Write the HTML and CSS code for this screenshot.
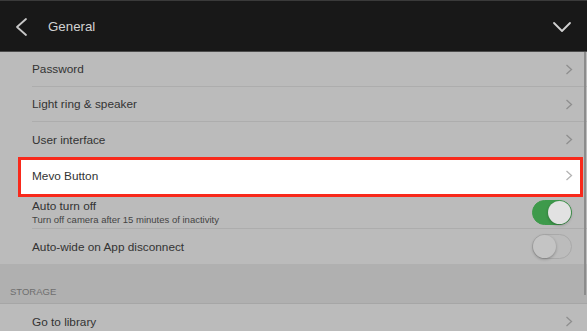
FILE: index.html
```html
<!DOCTYPE html>
<html lang="en">
<head>
    <meta charset="UTF-8">
    <meta name="viewport" content="width=device-width, initial-scale=1.0">
    <title>General</title>
    <link rel="stylesheet" href="styles.css">
</head>
<body>
    <header>
        <svg class="back" width="14" height="20" viewBox="0 0 14 20">
            <path d="M11 2 L2 10 L11 18" fill="none" stroke="#c8c8c8" stroke-width="1.8" stroke-linecap="round" stroke-linejoin="round"/>
        </svg>
        <h1>General</h1>
        <svg class="down" width="20" height="14" viewBox="0 0 20 14">
            <path d="M2 3 L10 11 L18 3" fill="none" stroke="#d0d0d0" stroke-width="1.8" stroke-linecap="round" stroke-linejoin="round"/>
        </svg>
    </header>

    <main class="settings">
        <div class="scrollbar"></div>

        <section class="group">
            <div class="row">
                <span>Password</span>
                <svg class="chev" width="8" height="11" viewBox="0 0 8 11"><path d="M1.5 1 L6.5 5.5 L1.5 10" fill="none" stroke="#8e8e8e" stroke-width="1.3"/></svg>
            </div>
            <div class="row">
                <span>Light ring &amp; speaker</span>
                <svg class="chev" width="8" height="11" viewBox="0 0 8 11"><path d="M1.5 1 L6.5 5.5 L1.5 10" fill="none" stroke="#8e8e8e" stroke-width="1.3"/></svg>
            </div>
            <div class="row no-line">
                <span>User interface</span>
                <svg class="chev" width="8" height="11" viewBox="0 0 8 11"><path d="M1.5 1 L6.5 5.5 L1.5 10" fill="none" stroke="#8e8e8e" stroke-width="1.3"/></svg>
            </div>
            <div class="row-highlight">
                <span>Mevo Button</span>
                <svg class="chev" width="8" height="11" viewBox="0 0 8 11"><path d="M1.5 1 L6.5 5.5 L1.5 10" fill="none" stroke="#b4b4b4" stroke-width="1.3"/></svg>
            </div>
            <div class="row row-tall">
                <div class="label">
                    <span>Auto turn off</span>
                    <small>Turn off camera after 15 minutes of inactivity</small>
                </div>
                <div class="toggle on"><div class="knob"></div></div>
            </div>
            <div class="row no-line">
                <span>Auto-wide on App disconnect</span>
                <div class="toggle"><div class="knob"></div></div>
            </div>
        </section>

        <div class="section-title">STORAGE</div>

        <section class="group">
            <div class="row no-line">
                <span>Go to library</span>
                <svg class="chev" width="8" height="11" viewBox="0 0 8 11"><path d="M1.5 1 L6.5 5.5 L1.5 10" fill="none" stroke="#8e8e8e" stroke-width="1.3"/></svg>
            </div>
        </section>
    </main>
</body>
</html>
```

FILE: styles.css
```css
body {
    margin: 0;
    font-family: 'Liberation Sans', Arial, sans-serif;
    background-color: #bbbbbb;
    color: #333;
    width: 587px;
    height: 331px;
    overflow: hidden;
}
header {
    height: 50px;
    background-color: #181818;
    border-top: 1px solid #3a3a3a;
    border-bottom: 1px solid #4c4c4c;
    display: flex;
    align-items: center;
    padding: 0 15px 0 15px;
}
header h1 {
    margin: 0 0 0 19px;
    font-size: 13.3px;
    font-weight: normal;
    color: #d2d2d2;
    flex: 1;
}
.back {
    margin-top: 2px;
}
.down {
    margin-top: 2px;
}
.settings {
    position: relative;
}
.scrollbar {
    position: absolute;
    right: 1px;
    top: 0;
    width: 2px;
    height: 243px;
    background-color: #8c8c8c;
}
.group {
    background-color: #bbbbbb;
}
.row {
    height: 34px;
    margin-left: 32px;
    padding-right: 14px;
    border-bottom: 1px solid #adadad;
    display: flex;
    align-items: center;
    justify-content: space-between;
    font-size: 11.8px;
}
.row.no-line {
    height: 35px;
    border-bottom: none;
}
.row-tall {
    height: 31px;
}
.label {
    display: flex;
    flex-direction: column;
    margin-top: -2px;
}
.label small {
    font-size: 9.5px;
    color: #444;
    margin-top: 1px;
}
.row-highlight {
    height: 31px;
    margin: 0 4px 0 18px;
    border: 3px solid #f8291b;
    background-color: #ffffff;
    display: flex;
    align-items: center;
    justify-content: space-between;
    padding: 0 7px 3px 11px;
    font-size: 11.8px;
    color: #333;
}
.chev {
    display: block;
}
.toggle {
    width: 40px;
    height: 25px;
    box-sizing: border-box;
    border-radius: 13px;
    border: 1px solid #a9a9a9;
    background-color: #bcbcbc;
    position: relative;
    margin-right: 1px;
}
.toggle .knob {
    position: absolute;
    left: 0;
    top: 0;
    width: 23px;
    height: 23px;
    border-radius: 50%;
    background-color: #c4c4c4;
    box-shadow: 0 1px 3px rgba(0, 0, 0, 0.3);
}
.toggle.on {
    background-color: #3e9a4b;
    border-color: #3e9a4b;
}
.toggle.on .knob {
    left: auto;
    right: 0;
    background-color: #e2e2e2;
}
.section-title {
    height: 39px;
    background-color: #b0b0b0;
    border-bottom: 1px solid #a6a6a6;
    display: flex;
    align-items: flex-end;
    padding-left: 10px;
    font-size: 9.5px;
    color: #6e6e6e;
    line-height: 22px;
}
```
